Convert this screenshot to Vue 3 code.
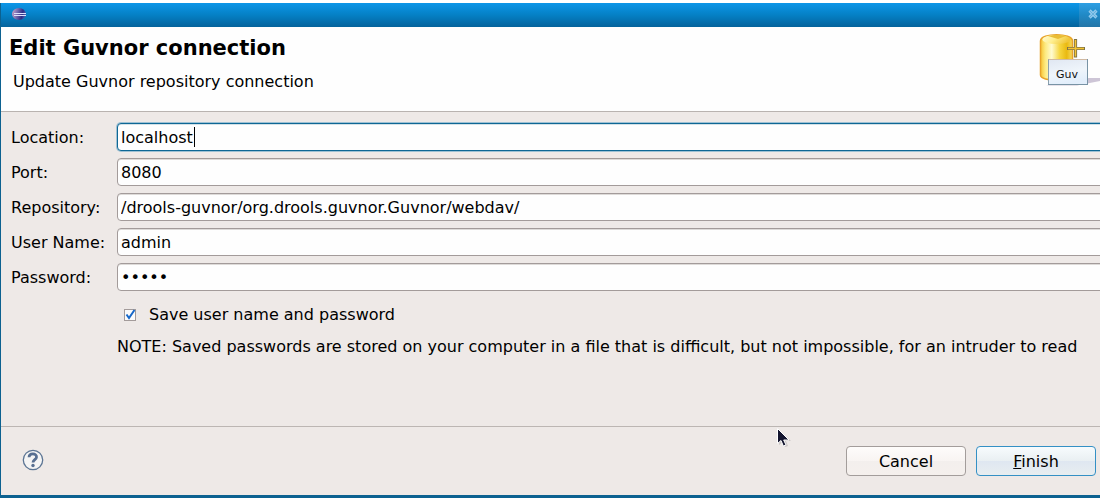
<script setup>
import { ref } from 'vue'

const fields = ref([
  { id: 'location', label: 'Location:', type: 'text', value: 'localhost', active: true },
  { id: 'port', label: 'Port:', type: 'text', value: '8080' },
  { id: 'repository', label: 'Repository:', type: 'text', value: '/drools-guvnor/org.drools.guvnor.Guvnor/webdav/' },
  { id: 'user', label: 'User Name:', type: 'text', value: 'admin' },
  { id: 'password', label: 'Password:', type: 'password', value: 'admin' }
])
const save = ref(true)
</script>

<template>
  <div class="desktop">
    <main class="dialog">
      <div class="titlebar">
        <svg class="app-icon" width="14" height="12" viewBox="0 0 14 12" aria-hidden="true">
          <defs>
            <linearGradient id="ball" x1="0" x2="1" y1="0" y2="0.2">
              <stop offset="0" stop-color="#d9a9c6" />
              <stop offset="0.4" stop-color="#7a70b3" />
              <stop offset="0.8" stop-color="#2e2c84" />
              <stop offset="1" stop-color="#4a55a8" />
            </linearGradient>
          </defs>
          <ellipse cx="7" cy="6" rx="7" ry="6" fill="url(#ball)" />
          <path d="M2 5.5h12M2 7.5h12" stroke="#dce0fa" stroke-width="1" />
        </svg>
        <button class="close" type="button" aria-label="Close">
          <svg width="10" height="10" viewBox="0 0 10 10">
            <path d="M1.500 1.500l7 7M8.500 1.500l-7 7" stroke="#8ec8ec" stroke-width="3.200" />
            <path d="M2 2l6 6M8 2l-6 6" stroke="#5aa9d9" stroke-width="0.800" />
          </svg>
        </button>
      </div>

      <header class="header">
        <div>
          <h1>Edit Guvnor connection</h1>
          <p>Update Guvnor repository connection</p>
        </div>
        <svg class="banner" width="64" height="56" viewBox="0 0 64 56" aria-hidden="true">
          <defs>
            <linearGradient id="gold" x1="0" x2="1" y1="0" y2="0">
              <stop offset="0" stop-color="#f6c334" />
              <stop offset="0.15" stop-color="#fdea80" />
              <stop offset="0.35" stop-color="#fffbd0" />
              <stop offset="0.6" stop-color="#f6d640" />
              <stop offset="0.82" stop-color="#e9b911" />
              <stop offset="1" stop-color="#f8dc62" />
            </linearGradient>
            <linearGradient id="lid" x1="0" x2="1" y1="0" y2="0.3">
              <stop offset="0" stop-color="#fffbd4" />
              <stop offset="0.5" stop-color="#ffef8f" />
              <stop offset="1" stop-color="#f0c638" />
            </linearGradient>
            <linearGradient id="card" x1="0" x2="0.3" y1="0" y2="1">
              <stop offset="0" stop-color="#e0e7f2" />
              <stop offset="0.6" stop-color="#eff5fb" />
              <stop offset="1" stop-color="#e2eefb" />
            </linearGradient>
          </defs>
          <path d="M10 54.500h31l23-4.500v-3H53z" fill="#cdc5d6" />
          <path d="M4.500 10C4.500 1.500 36.500 1.500 36.500 10V44C36.500 51 4.500 51 4.500 44Z" fill="url(#gold)" stroke="#e8a32a" stroke-width="1.500" />
          <ellipse cx="20.500" cy="8.500" rx="14" ry="4.500" fill="url(#lid)" />
          <path d="M22 8L12 5C17 3.500 25 3.500 30 5Z" fill="#e9bd35" />
          <path d="M39.500 8v18.500M31 17.500h18" stroke="#807446" stroke-width="3.200" />
          <path d="M39.500 9v16.500M32 17.500h16" stroke="#f4c333" stroke-width="1.400" />
          <rect x="12.500" y="28.500" width="39" height="25" fill="url(#card)" stroke="#7893a5" />
          <path d="M12.500 53V28.500" stroke="#8ba0ad" />
          <path d="M12.500 28.500H51" stroke="#d0b9a2" />
          <text x="20" y="47" font-family="DejaVu Sans, sans-serif" font-size="11" fill="#111">Guv</text>
        </svg>
      </header>

      <form id="connection" class="form" @submit.prevent>
        <template v-for="f in fields" :key="f.id">
          <label :for="f.id">{{ f.label }}</label>
          <div class="field" :class="{ active: f.active }">
            <input :id="f.id" v-model="f.value" :type="f.type" autocomplete="off" />
            <span v-if="f.active" class="caret" aria-hidden="true"></span>
          </div>
        </template>
        <label class="save">
          <span class="tick">
            <input v-model="save" type="checkbox" />
            <svg v-if="save" width="12" height="12" viewBox="0 0 12 12" aria-hidden="true">
              <path d="M2.500 5.500l2.500 3.500L10.500 1" fill="none" stroke="#1768c9" stroke-width="2" />
            </svg>
          </span>
          Save user name and password
        </label>
        <p class="note">NOTE: Saved passwords are stored on your computer in a file that is difficult, but not impossible, for an intruder to read</p>
      </form>

      <footer class="footer">
        <button class="help" type="button" aria-label="Help">
          <svg width="22" height="22" viewBox="0 0 22 22">
            <circle cx="11" cy="11" r="9.700" fill="#f4f4f4" stroke="#5c7594" stroke-width="1.300" />
            <path d="M7 8.300C7.200 3.700 14.800 3.900 14.500 8.200C14.400 10.600 11 10.800 11 13.500" fill="none" stroke="#586f91" stroke-width="2.800" />
            <circle cx="11" cy="16.500" r="1.700" fill="#586f91" />
          </svg>
        </button>
        <div class="actions">
          <button class="btn" type="button">Cancel</button>
          <button class="btn primary" type="submit" form="connection"><u>F</u>inish</button>
        </div>
      </footer>
    </main>

    <svg class="pointer" width="14" height="20" viewBox="0 0 14 20" aria-hidden="true">
      <path d="M2 2v15l4-3 2 5 3-1-2-5h5z" fill="#b5b0b0" opacity="0.6" />
      <path d="M.5.5v15l3.500-3 2.300 5.500 2.700-1-2.300-5H12z" fill="#14152f" stroke="#fff" />
    </svg>
  </div>
</template>

<style>
body {
  background: #fff;
}
</style>

<style scoped>
.desktop {
  position: relative;
  box-sizing: border-box;
  min-height: 100vh;
  padding: 3px 0 2px;
  display: flex;
  overflow: hidden;
  font: 16px/20px "DejaVu Sans", sans-serif;
  color: #000;
}
.dialog {
  flex: 1;
  min-width: 0;
  display: flex;
  flex-direction: column;
  background: #eee9e7;
  border-left: 1px solid #0c6190;
  border-bottom: 3px solid #0c6190;
}
.titlebar {
  display: flex;
  justify-content: space-between;
  align-items: center;
  height: 24px;
  padding-left: 11px;
  background: linear-gradient(#0d96e8, #0580c5 50%, #05639c);
}
.app-icon {
  display: block;
  margin-bottom: 2px;
}
.close {
  display: flex;
  align-items: center;
  height: 24px;
  width: 21px;
  padding: 0 0 2px 9px;
  border: 0;
  background: linear-gradient(#2e9fe3, #2189c5 50%, #2475a7);
}
.close svg {
  flex: none;
}
.header {
  display: flex;
  justify-content: space-between;
  height: 84px;
  background: #fefefe;
  border-bottom: 1px solid #b9b3b0;
}
h1 {
  margin: 9px 0 0 8px;
  font-size: 21px;
  line-height: 24px;
}
.header p {
  margin: 12px 0 0 12px;
}
.banner {
  flex: none;
  margin-top: 4px;
}
.form {
  flex: 1;
  display: grid;
  grid-template-columns: 99px minmax(0, 1fr);
  column-gap: 7px;
  row-gap: 7px;
  align-content: start;
  align-items: center;
  padding: 11px 0 0 10px;
}
.form > label {
  padding-top: 2px;
  white-space: nowrap;
}
.field {
  position: relative;
  display: flex;
  margin-right: -8px;
}
.field input {
  box-sizing: border-box;
  width: 100%;
  height: 28px;
  padding: 0 3px;
  border: 1px solid #a39b9a;
  border-radius: 4px;
  background: #fefefe;
  box-shadow: inset 0 1px #dedbd9;
  font: inherit;
  color: inherit;
  outline: none;
}
.active input {
  border-color: #0e6795;
  box-shadow: 0 0 0 1px #9fc1d3, inset 0 1px #d3e1e7;
}
.caret {
  position: absolute;
  left: 77px;
  top: 4px;
  width: 1px;
  height: 20px;
  background: #000;
}
.form .save {
  grid-column: 2;
  display: flex;
  align-items: center;
  gap: 13px;
  margin-top: 5px;
  padding-left: 7px;
}
.tick {
  position: relative;
  display: flex;
}
.tick input {
  appearance: none;
  width: 12px;
  height: 12px;
  margin: 0;
  border: 1px solid #a39b9a;
  background: #fbfbfb;
}
.tick svg {
  position: absolute;
  left: 0;
  top: 0;
}
.note {
  grid-column: 2;
  margin: 5px 0 0;
  white-space: nowrap;
  overflow: hidden;
}
.footer {
  display: flex;
  align-items: center;
  justify-content: space-between;
  height: 68px;
  padding: 0 4px 0 21px;
  border-top: 1px solid #bcb6b3;
}
.help {
  display: flex;
  padding: 0 0 2px;
  border: 0;
  background: none;
}
.actions {
  display: flex;
  gap: 10px;
}
.btn {
  width: 120px;
  height: 30px;
  padding: 2px 0 0;
  border: 1px solid #a39d9b;
  border-radius: 4px;
  background: linear-gradient(#fefcfb, #f8f4f2 50%, #f3efed 51%, #f5f0ed);
  font: inherit;
  color: inherit;
}
.primary {
  border-color: #3490c5;
  background: linear-gradient(#f7fbfd, #e9eff2 50%, #dfe7f1 51%, #e8eef0);
}
.pointer {
  position: absolute;
  left: 777px;
  top: 428px;
}
</style>
